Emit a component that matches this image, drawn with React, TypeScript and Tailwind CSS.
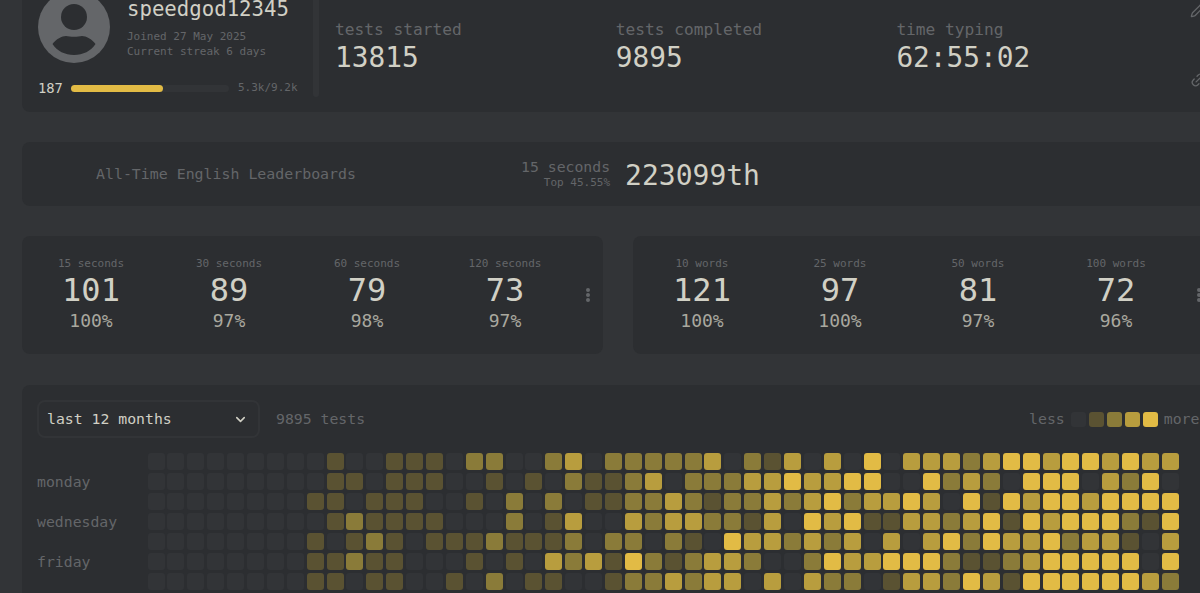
import { Link2, Pencil, ChevronDown } from "lucide-react";

const mono = "font-['DejaVu_Sans_Mono','Liberation_Mono',monospace]";

const levels = [
  "bg-[#323437]",
  "bg-[#5a5232]",
  "bg-[#8a7b39]",
  "bg-[#b89d3e]",
  "bg-[#e2bb45]",
];

// one row per weekday, one number per week
const cells: number[][] = [
  [0,0,0,0,0,0,0,0,0,1,0,0,1, 1,1,0,2,2,0,0,2,3,0,2,2,2,2,2,3,0,2,1,3, 0,3,0,4,0,3,3,3,2,3,4,4,3,4,4,3,4,3,3],
  [0,0,0,0,0,0,0,0,0,1,1,0,1, 1,1,0,0,1,0,1,0,2,1,1,2,3,0,2,2,2,3,3,4, 3,3,4,4,0,0,4,2,3,2,0,4,4,4,0,3,2,4,0],
  [0,0,0,0,0,0,0,0,1,1,0,1,1, 1,0,0,1,0,2,0,2,0,1,1,2,2,3,2,1,2,2,3,2, 3,4,2,3,3,4,3,0,4,1,4,3,4,4,3,4,4,4,4],
  [0,0,0,0,0,0,0,0,0,1,2,1,1, 1,1,0,0,0,2,0,1,3,0,0,3,2,3,3,2,2,1,3,0, 4,3,4,1,1,3,3,2,3,4,1,4,3,4,4,4,2,1,4],
  [0,0,0,0,0,0,0,0,1,0,1,2,1, 0,1,1,1,2,1,1,1,2,0,2,2,0,2,1,0,4,3,3,2, 3,2,3,0,3,0,3,4,2,4,3,3,4,2,3,3,1,0,3],
  [0,0,0,0,0,0,0,0,1,1,2,1,1, 0,0,0,1,0,1,0,3,2,3,1,4,2,1,2,3,3,2,0,0, 2,4,3,3,4,4,4,2,1,1,2,3,4,4,4,4,4,0,4],
  [0,0,0,0,0,0,0,0,1,1,0,1,1, 0,0,1,0,2,0,1,1,0,0,1,2,2,3,2,3,3,0,3,0, 3,2,2,0,1,3,3,2,4,3,1,4,4,4,4,4,4,3,2],
];

const dayLabels = ["", "monday", "", "wednesday", "", "friday", ""];

const timeBests = [
  { label: "15 seconds", wpm: "101", acc: "100%" },
  { label: "30 seconds", wpm: "89", acc: "97%" },
  { label: "60 seconds", wpm: "79", acc: "98%" },
  { label: "120 seconds", wpm: "73", acc: "97%" },
];

const wordBests = [
  { label: "10 words", wpm: "121", acc: "100%" },
  { label: "25 words", wpm: "97", acc: "100%" },
  { label: "50 words", wpm: "81", acc: "97%" },
  { label: "100 words", wpm: "72", acc: "96%" },
];

const topStats = [
  { label: "tests started", value: "13815" },
  { label: "tests completed", value: "9895" },
  { label: "time typing", value: "62:55:02" },
];

const BestsCard = ({ items }: { items: typeof timeBests }) => (
  <div className="flex h-[118px] w-[581px] rounded-lg bg-[#2c2e31] pt-[20px]">
    {items.map((item) => (
      <div key={item.label} className="flex w-[138px] flex-col items-center">
        <div className="text-[11px] leading-[16px] text-[#646669]">{item.label}</div>
        <div className="mt-[-1px] text-[32px] leading-[38px] text-[#d1d0c5]">{item.wpm}</div>
        <div className="text-[18px] leading-[24px] text-[#a9a89f]">{item.acc}</div>
      </div>
    ))}
    <div className="ml-[12px] mt-[32px] flex flex-col gap-[1px]">
      <div className="h-[4px] w-[4px] rounded-full bg-[#646669]" />
      <div className="h-[4px] w-[4px] rounded-full bg-[#646669]" />
      <div className="h-[4px] w-[4px] rounded-full bg-[#646669]" />
    </div>
  </div>
);

export default function App() {
  return (
    <div className={`h-[593px] w-[1200px] overflow-hidden bg-[#323437] pl-[22px] ${mono}`}>
      <div className="flex w-[1192px] flex-col">
        <div className="mt-[-24px] flex h-[136px] rounded-lg bg-[#2c2e31]">
          <div className="flex w-[291px] shrink-0 flex-col pl-[16px] pt-[15px]">
            <div className="flex">
              <div className="h-[72px] w-[72px] rounded-full bg-[#646669]">
                <svg width="72" height="72" viewBox="0 0 72 72" fill="#2c2e31">
                  <circle cx="36" cy="26" r="13" />
                  <path d="M14.5 53C18 48 24 45 28 45C32 46 40 46 44 45C48 45 54 48 57.5 53C53 60 45 64 36 64C27 64 19 60 14.5 53Z" />
                </svg>
              </div>
              <div className="ml-[17px]">
                <div className="mt-[6px] text-[20.7px] leading-[24px] text-[#d1d0c5]">speedgod12345</div>
                <div className="mt-[8px] text-[11px] leading-[15px] text-[#646669]">Joined 27 May 2025</div>
                <div className="text-[11px] leading-[15px] text-[#646669]">Current streak 6 days</div>
              </div>
            </div>
            <div className="mt-[16px] flex items-center">
              <div className="w-[33px] text-[13.8px] leading-[18px] text-[#d1d0c5]">187</div>
              <div className="h-[7px] w-[158px] rounded-full bg-[#323437]">
                <div className="h-[7px] w-[92px] rounded-full bg-[#e2bb45]" />
              </div>
              <div className="ml-[9px] text-[11px] leading-[18px] text-[#646669]">5.3k/9.2k</div>
            </div>
          </div>
          <div className="h-[121px] w-[6px] shrink-0 rounded-b-sm bg-[#323437]" />
          <div className="ml-[16px] flex w-[856px] shrink-0 pt-[43px]">
            {topStats.map((stat) => (
              <div key={stat.label} className="w-[280.7px]">
                <div className="text-[16.2px] leading-[22px] text-[#646669]">{stat.label}</div>
                <div className="text-[27.8px] leading-[34px] text-[#d1d0c5]">{stat.value}</div>
              </div>
            ))}
          </div>
          <div className="flex shrink-0 flex-col gap-[54px] pt-[26px] text-[#646669]">
            <Pencil size={16} className="ml-[-1px]" />
            <Link2 size={16} className="ml-[-1px] -rotate-45" />
          </div>
        </div>

        <div className="mt-[30px] flex h-[64px] items-center rounded-lg bg-[#2c2e31]">
          <div className="ml-[74px] w-[425px] text-[14.9px] text-[#646669]">All-Time English Leaderboards</div>
          <div className="text-right text-[#646669]">
            <div className="text-[14.8px] leading-[18px]">15 seconds</div>
            <div className="text-[11px] leading-[14px]">Top 45.55%</div>
          </div>
          <div className="ml-[15px] mt-[3px] text-[28px] leading-[34px] text-[#d1d0c5]">223099th</div>
        </div>

        <div className="mt-[30px] flex gap-[30px]">
          <BestsCard items={timeBests} />
          <BestsCard items={wordBests} />
        </div>

        <div className="mt-[31px] rounded-lg bg-[#2c2e31] pb-[20px] pl-[15px] pt-[15px]">
          <div className="flex h-[38px] items-center">
            <div className="flex h-[38px] w-[223px] items-center justify-between rounded-lg border-2 border-[#323437] pl-[8px] pr-[10px] text-[14.8px] text-[#d1d0c5]">
              <span>last 12 months</span>
              <ChevronDown size={15} strokeWidth={2.5} />
            </div>
            <div className="ml-[16px] text-[14.8px] text-[#646669]">9895 tests</div>
            <div className="ml-[664px] flex items-center gap-[3px] text-[14.8px] text-[#646669]">
              <span className="mr-[3px]">less</span>
              {levels.map((level) => (
                <div key={level} className={`h-[15px] w-[15px] rounded-[3px] ${level}`} />
              ))}
              <span className="ml-[3px]">more</span>
            </div>
          </div>
          <div className="mt-[15px] flex">
            <div className="grid w-[110.5px] shrink-0 auto-rows-[17px] gap-y-[3px] text-[14.8px] leading-[17px] text-[#646669]">
              {dayLabels.map((day, i) => (
                <div key={i}>{day}</div>
              ))}
            </div>
            <div className="grid grid-cols-[repeat(52,17px)] auto-rows-[17px] gap-x-[2.9px] gap-y-[3px]">
              {cells.flatMap((row, r) =>
                row.map((level, c) => (
                  <div key={`${r}-${c}`} className={`rounded-[3px] ${levels[level]}`} />
                )),
              )}
            </div>
          </div>
        </div>
      </div>
    </div>
  );
}
